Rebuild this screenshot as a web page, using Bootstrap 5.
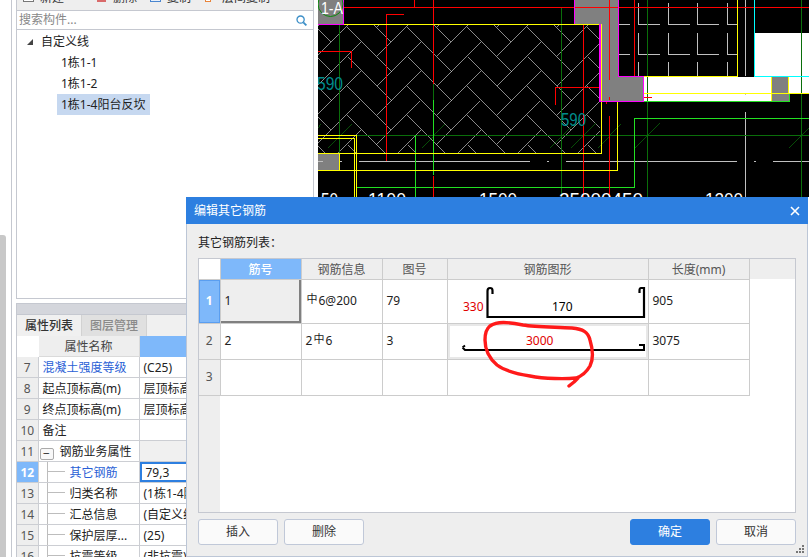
<!DOCTYPE html>
<html lang="zh">
<head>
<meta charset="utf-8">
<title>编辑其它钢筋</title>
<link href="https://cdn.jsdelivr.net/npm/bootstrap@5.3.0/dist/css/bootstrap.min.css" rel="stylesheet">
<style>
html,body{height:100%;margin:0;background:#fff}
body{font-family:"Noto Sans","Noto Sans CJK SC",sans-serif;font-size:12px;line-height:14px;color:#222;overflow:hidden}
.stage{position:relative;width:809px;height:557px;overflow:hidden}
.rail{width:11px;flex:none}
.thumb{width:6px;height:322px;background:#c8c8c8;border-top-right-radius:3px}
.frame{width:307px;flex:none;border-left:1px solid #c5c8d0;padding-left:4px;padding-right:4px}
.upper{height:299px;flex:none;border:1px solid #c5c8d0;border-top:0}
.toolbar{height:11px;flex:none;background:#eee;border-bottom:1px solid #c5c8d0;overflow:hidden;padding-left:6px}
.tool{align-items:flex-end;gap:6px;white-space:nowrap;height:10px;color:#333}
.tool svg{flex:none;margin-bottom:8px}
.tool span{line-height:12px;margin-bottom:6px}
.t1{width:73px}.t2{width:54px}.t3{width:55px}.t4{width:80px}
.finder{height:19px;flex:none;border-bottom:1px solid #c5c8d0;padding:0 6px 0 2px;color:#888}
.tree{padding:1px 0 0;margin:0;color:#222}
.tree li{height:21px;line-height:21px;padding-left:44px;white-space:nowrap}
.tree li.rootn{padding-left:10px;display:flex;align-items:center;gap:7px}
.tree .picked{display:inline-block;background:#c6d8f0;padding:0 0 0 4px;margin-left:-4px;width:93px;height:21px}
.lower{margin-top:4px;flex:1;min-height:0;border:1px solid #c5c8d0;border-bottom:0;overflow:hidden}
.greybar{height:11px;flex:none;background:#d4d6dc;border-bottom:1px solid #c5c8d0}
.tabrow{height:21px;flex:none;background:#f0f0f0}
.tabb{width:65px;text-align:center;line-height:21px;border-right:1px solid #d2d2d2;font-weight:500;color:#333}
.tabb.off{background:#e0e0e0;color:#8a8a8a}
.ptab.table{table-layout:fixed;width:296px;margin:0;border-collapse:collapse;--bs-table-border-color:#ccced3}
.ptab.table>:not(caption)>*>*{padding:2px 0 0 4px;height:21px;line-height:18px;font-size:12px;font-weight:400;white-space:nowrap;overflow:hidden;color:#222;border:1px solid #ccced3;border-top:0;border-left:0;background:#fff;box-shadow:none}
.ptab.table>thead>tr>th{height:20px;line-height:18px;background:#eee;text-align:center;color:#444;padding:1px 0 0;border-color:#dadada}
.ptab.table>thead>tr>th.blankc{background:#fff;border-color:#fff}
.ptab.table>thead>tr>th.hot{background:#7eb8fa;border-color:#7eb8fa}
.ptab.table>tbody>tr>td.idx{background:#eee;text-align:center;color:#555;padding:2px 0 0}
.ptab.table>tbody>tr>td.idx.now{background:#7eb8fa;color:#fff;font-weight:700}
.ptab.table>tbody>tr>td.linky{color:#2a5fd6}
.ptab.table>tbody>tr>td.shade{background:#f0f0f0}
.ptab.table>tbody>tr>td.expd{padding-left:1px}
.ptab.table>tbody>tr>td.nest{padding-left:31px;background-color:#fff;background-image:linear-gradient(#bdbdbd,#bdbdbd),linear-gradient(#bdbdbd,#bdbdbd);background-repeat:no-repeat;background-size:1px 100%,17px 1px;background-position:8px 0,9px 50%}
.ptab.table>tbody>tr>td.edit{box-shadow:inset 2px 2px 0 #2d7fe0,inset 0 -2px 0 #2d7fe0;padding-left:6px}
.c1{width:21px}.c2{width:101px}
.expander{width:14px;height:12px;border:1px solid #aaa;border-radius:2px;margin-right:6px;color:#333;vertical-align:-2px;background:#f8f8f8;line-height:9px}
.cad{flex:1;min-width:0;overflow:hidden;background:#000}
.cad svg{display:block}
.win{position:absolute;left:186px;top:197px;width:622px;height:360px}
.wintitle{height:27px;flex:none;background:#2d7fe0;color:#fff;padding:0 8px;line-height:27px}
.winbody{flex:1;min-height:0;background:#eee;border:1px solid #bcc6d6;border-top:0;padding:12px 11px 11px;position:relative}
.caption{height:14px;line-height:14px;margin-bottom:8px;color:#222}
.gridbox{flex:1;min-height:0;border:1px solid #c5c8d0;background:#fff;overflow:hidden}
.gridt.table{table-layout:fixed;width:100%;height:100%;margin:0;border-collapse:collapse}
.gridt.table>:not(caption)>*>*{padding:0 0 0 4px;font-size:12px;font-weight:400;line-height:14px;color:#222;vertical-align:middle;background:#fff;border:0;border-right:1px solid #ccc;border-bottom:1px solid #ccc;box-shadow:none;white-space:nowrap}
.gridt.table>thead>tr>th{height:20px;background:#eee;text-align:center;color:#555;padding:2px 0 0}
.gridt.table>thead>tr>th.blankc{background:#fff}
.gridt.table>thead>tr>th.hot{background:#7eb8fa;color:#fff;font-weight:500}
.gridt.table>thead>tr>th.endc{border-right:0;border-bottom:0}
.gridt.table>tbody>tr>td.idx{background:#eee;text-align:center;color:#555;padding:0}
.gridt.table>tbody>tr>td.idx.now{background:#7eb8fa;color:#fff;font-weight:700;box-shadow:inset 0 0 0 1px #5a9ef0}
.gridt.table>tbody>tr>td.cur{background:#eee;box-shadow:inset -2px -2px 0 #808080}
.gridt.table>tbody>tr>td.shp{padding:0}
.gridt.table>tbody>tr>td.shp2{box-shadow:inset 0 0 0 2px #e8e8e8}
.gridt.table>tbody>tr>td.endc{border-right:0;border-bottom:0}
.gridt.table>tbody>tr>td.rest{border-bottom:0;border-right:0}
.gridt.table>tbody>tr>td.lastidx{border-bottom:0;border-right:0}
.r1>td{height:44px}.r2>td{height:36px}.r3>td{height:36px}
.g1{width:21px}.g2{width:81px}.g3{width:81px}.g4{width:65px}.g5{width:201px}.g6{width:101px}
.rebar{font-size:11px;position:relative;top:-2px;margin:0 1px}
.shp svg{display:block;width:200px}
.footerbar{flex:none;margin-top:6px;height:26px}
.btnset{gap:6px}
.wbtn.btn{width:80px;height:26px;padding:0;font-size:12px;line-height:24px;border-radius:3px;background:#fafafa;border:1px solid #c0c8d8;color:#333}
.wbtn.btn.btn-primary{background:#2d7fe0;border-color:#2d7fe0;color:#fff}
.xbtn{background:none;border:0;padding:0;line-height:0}
.annot{position:absolute;left:0;top:0;width:622px;height:360px;pointer-events:none}
.grip{position:absolute;right:2px;bottom:2px;display:block}
</style>
</head>
<body>
<div class="stage d-flex">
  <div class="rail d-flex flex-column justify-content-end"><div class="thumb"></div></div>
  <div class="frame d-flex flex-column">
    <div class="upper d-flex flex-column">
      <div class="toolbar d-flex">
        <div class="tool t1 d-flex"><svg width="11" height="12"><rect x=".5" y=".5" width="10" height="11" fill="#fff" stroke="#777"/></svg><span>新建</span></div>
        <div class="tool t2 d-flex"><svg width="11" height="12"><rect x="1" y="0" width="9" height="12" fill="#d96a6a"/></svg><span>删除</span></div>
        <div class="tool t3 d-flex"><svg width="11" height="12"><rect x=".5" y=".5" width="10" height="11" fill="#e8f0fa" stroke="#4a86cf"/></svg><span>复制</span></div>
        <div class="tool t4 d-flex"><svg width="11" height="12"><rect x=".5" y=".5" width="5" height="11" fill="#fff" stroke="#e8843a"/></svg><span>层间复制</span></div>
      </div>
      <div class="finder d-flex align-items-center justify-content-between">
        <span>搜索构件...</span>
        <svg width="11" height="11" viewBox="0 0 11 11" fill="none" stroke="#3c8fc8"><circle cx="4.6" cy="4.6" r="3.6" stroke-width="1.3"/><path d="M7.3 7.3L10.4 10.4" stroke-width="1.8"/></svg>
      </div>
      <ul class="tree list-unstyled">
        <li class="rootn"><svg width="7" height="6"><polygon points="0,6 6,6 6,0" fill="#444"/></svg><span>自定义线</span></li>
        <li>1栋1-1</li>
        <li>1栋1-2</li>
        <li><span class="picked">1栋1-4阳台反坎</span></li>
      </ul>
    </div>
    <div class="lower d-flex flex-column">
      <div class="greybar"></div>
      <div class="tabrow d-flex"><div class="tabb">属性列表</div><div class="tabb off">图层管理</div></div>
      <table class="table ptab">
        <colgroup><col class="c1"><col class="c2"><col></colgroup>
        <thead><tr><th class="blankc"></th><th>属性名称</th><th class="hot"></th></tr></thead>
        <tbody>
          <tr><td class="idx">7</td><td class="linky">混凝土强度等级</td><td>(C25)</td></tr>
          <tr><td class="idx">8</td><td>起点顶标高(m)</td><td>层顶标高</td></tr>
          <tr><td class="idx">9</td><td>终点顶标高(m)</td><td>层顶标高</td></tr>
          <tr><td class="idx">10</td><td>备注</td><td></td></tr>
          <tr><td class="idx">11</td><td class="expd"><span class="expander d-inline-flex justify-content-center">−</span>钢筋业务属性</td><td class="shade"></td></tr>
          <tr><td class="idx now">12</td><td class="nest linky">其它钢筋</td><td class="edit">79,3</td></tr>
          <tr><td class="idx">13</td><td class="nest">归类名称</td><td>(1栋1-4阳台反坎)</td></tr>
          <tr><td class="idx">14</td><td class="nest">汇总信息</td><td>(自定义线)</td></tr>
          <tr><td class="idx">15</td><td class="nest">保护层厚...</td><td>(25)</td></tr>
          <tr><td class="idx">16</td><td class="nest">抗震等级</td><td>(非抗震)</td></tr>
        </tbody>
      </table>
    </div>
  </div>
  <div class="cad">
    <svg width="491" height="557" viewBox="0 0 491 557" shape-rendering="crispEdges" fill="none">
      <defs>
        <clipPath id="hatchclip"><rect x="0" y="25" width="282" height="128"/></clipPath>
      </defs>
      <path id="hatch" clip-path="url(#hatchclip)" stroke="#c4c4c4" stroke-width="0.7"/>
      <rect x="490" y="197" width="1" height="360" fill="#fff"/>
      <!-- grey and white masses -->
      <rect x="0" y="0" width="25" height="24" fill="#808080"/>
      <polygon points="257,0 300,0 300,76 325,76 325,101 282,101 282,24 257,24" fill="#808080"/>
      <rect x="0" y="154" width="21" height="16" fill="#808080"/>
      <rect x="326" y="77" width="127" height="24" fill="#fff"/>
      <rect x="453" y="77" width="18" height="24" fill="#808080"/>
      <rect x="471" y="77" width="20" height="16" fill="#fff"/>
      <rect x="437" y="33" width="54" height="43" fill="#fff"/>
      <!-- grey drafting lines -->
      <g stroke="#c0c0c0" stroke-width="1">
        <path d="M0 161.5H5M22 161.5H24M41 161.5H212M229 161.5H231M248 161.5H419M436 161.5H438M455 161.5H491M427.5 0V76M427.5 112V197M427.5 93V95"/>
        <path d="M320.5 3V24.5H342M350.5 3V24.5H372M379.5 3V24.5H401M409.5 3V24.5H419M300 24.5H312"/>
        <path d="M320.5 33V54.5H342M350.5 33V54.5H372M379.5 33V54.5H401M409.5 33V54.5H419M300 54.5H312"/>
        <path d="M320.5 62V76M350.5 62V76M379.5 62V76M409.5 62V76"/>
      </g>
      <!-- dark green axes -->
      <g stroke="#0a6e0a" stroke-width="1">
        <path d="M0 135.5H491M21.5 25V153M243.5 8V197M329.5 0V197M483.5 0V197"/>
        <path d="M115.5 84V100"/>
      </g>
      <path d="M10 148L34 124M104 148L127 124M232 148L256 124M253 148L278 123M280 148L303 124M317 148L342 123M471 148L497 122M0 128L3 124" stroke="#0a6e0a" stroke-width="0.7"/>
      <!-- bright green -->
      <path d="M97.5 135V197M115.5 100V175M38 187.5H316.5V118.5H491M326 101.5H471V93" stroke="#22e022" stroke-width="1"/>
      <!-- red -->
      <path d="M25 7.5H491M96.5 0V7M86 14.5H68.5V161M0 51.5H33.5V68M115.5 0V84M115.5 176V197M265.5 24V197M291.5 0V80M291.5 97V100M291.5 116V197M316.5 0V76M237.5 105V87.5H282M326 97.5H334M288.5 102V104" stroke="#ff0000" stroke-width="1"/>
      <!-- yellow -->
      <path d="M26 24.5H257M257 24.5H283V153.5H0M299.5 102V170.5H0M0 135.5H38.5V197M0 138.5H36V197M21.5 154V170M419.5 0V76.5H326M326 93.5H491M453.5 77V101M470.5 77V93" stroke="#ffff00" stroke-width="1"/>
      <!-- magenta -->
      <path d="M25.5 0V24.5H0M256.5 0V24M281.5 24V102M282.5 24V102M300.5 0V76.5H325.5V101.5H282" stroke="#ff00ff" stroke-width="1"/>
      <!-- cyan -->
      <path d="M436.5 0V76.5H491" stroke="#00ffff" stroke-width="1"/>
      <!-- labels -->
      <circle cx="12.5" cy="4" r="12.5" stroke="#0a8a0a" stroke-width="1" shape-rendering="auto"/>
      <g shape-rendering="auto" font-family="Liberation Sans, sans-serif">
        <text x="3" y="14" fill="#fff" font-size="16" textLength="22" lengthAdjust="spacingAndGlyphs">1-A</text>
        <text x="-1" y="90" fill="#008c8c" font-size="19" textLength="26" lengthAdjust="spacingAndGlyphs">590</text>
        <text x="243" y="126" fill="#008c8c" font-size="19" textLength="25" lengthAdjust="spacingAndGlyphs">590</text>
        <g fill="#fff" font-size="18">
          <text x="3" y="206" textLength="17" lengthAdjust="spacingAndGlyphs">50</text>
          <text x="50" y="206" textLength="38" lengthAdjust="spacingAndGlyphs">1100</text>
          <text x="161" y="206" textLength="38" lengthAdjust="spacingAndGlyphs">1500</text>
          <text x="241" y="206" textLength="84" lengthAdjust="spacingAndGlyphs">25000450</text>
          <text x="387" y="206" textLength="38" lengthAdjust="spacingAndGlyphs">1200</text>
        </g>
      </g>
    </svg>
  </div>

  <div class="win d-flex flex-column">
    <div class="wintitle d-flex justify-content-between align-items-center">
      <span>编辑其它钢筋</span>
      <button type="button" class="xbtn" aria-label="关闭"><svg width="10" height="10" viewBox="0 0 10 10"><path d="M1 1L9 9M9 1L1 9" stroke="#fff" stroke-width="1.6"/></svg></button>
    </div>
    <div class="winbody d-flex flex-column">
      <div class="caption">其它钢筋列表：</div>
      <div class="gridbox">
        <table class="table gridt">
          <colgroup><col class="g1"><col class="g2"><col class="g3"><col class="g4"><col class="g5"><col class="g6"><col></colgroup>
          <thead><tr><th class="blankc"></th><th class="hot">筋号</th><th>钢筋信息</th><th>图号</th><th>钢筋图形</th><th>长度(mm)</th><th class="endc"></th></tr></thead>
          <tbody>
            <tr class="r1">
              <td class="idx now">1</td><td class="cur">1</td><td><span class="rebar">中</span>6@200</td><td>79</td>
              <td class="shp"><svg height="43" viewBox="0 0 200 43" fill="none">
                <path d="M44.5 14V10.5Q44.5 8 42 8Q39.5 8 39.5 11V37H196V8H193Q191.5 8 191.5 10.5V13" stroke="#000" stroke-width="2.2"/>
                <text x="15" y="30.5" fill="#e00000" font-size="12">330</text>
                <text x="104" y="30.5" fill="#000" font-size="12">170</text>
              </svg></td>
              <td>905</td><td class="endc"></td>
            </tr>
            <tr class="r2">
              <td class="idx">2</td><td>2</td><td>2<span class="rebar">中</span>6</td><td>3</td>
              <td class="shp shp2"><svg height="35" viewBox="0 0 200 35" fill="none">
                <path d="M14.5 23.5L17 26H196V21H191M14.5 23.5L17 21.5" stroke="#000" stroke-width="2"/>
                <text x="78" y="20.5" fill="#e00000" font-size="12">3000</text>
              </svg></td>
              <td>3075</td><td class="endc"></td>
            </tr>
            <tr class="r3">
              <td class="idx">3</td><td></td><td></td><td></td><td></td><td></td><td class="endc"></td>
            </tr>
            <tr><td class="idx lastidx"></td><td class="rest" colspan="6"></td></tr>
          </tbody>
        </table>
      </div>
      <div class="footerbar d-flex justify-content-between">
        <div class="d-flex btnset"><button type="button" class="btn wbtn">插入</button><button type="button" class="btn wbtn">删除</button></div>
        <div class="d-flex btnset"><button type="button" class="btn btn-primary wbtn">确定</button><button type="button" class="btn wbtn">取消</button></div>
      </div>
      <svg class="grip" width="9" height="9" viewBox="0 0 9 9" fill="#777"><rect x="6" y="0" width="2" height="2"/><rect x="3" y="3" width="2" height="2"/><rect x="6" y="3" width="2" height="2"/><rect x="0" y="6" width="2" height="2"/><rect x="3" y="6" width="2" height="2"/><rect x="6" y="6" width="2" height="2"/></svg>
    </div>
    <svg class="annot" viewBox="186 197 622 360" fill="none"><path d="M490 326C497 321 508 322 523 325C535 327 555 327 572 328C583 329 588 332 590 340C593 350 594 358 590 366C586 373 582 376 576 378C566 379 545 379 530 376C517 374 505 371 497 365C490 359 485 350 485 340C485 333 486 329 490 326M578 378L574 382L569 386" stroke="#ff1a1a" stroke-width="3.4" stroke-linecap="round" stroke-linejoin="round"/></svg>
  </div>
</div>
<script src="https://cdn.jsdelivr.net/npm/bootstrap@5.3.0/dist/js/bootstrap.bundle.min.js"></script>
<script>
  // Herringbone hatch: two strokes repeated on a 60 x 29.33 lattice.
  (function () {
    var d = [];
    for (var i = -3; i < 6; i++) {
      for (var j = -4; j < 7; j++) {
        var ox = 60 * i, oy = 29.33 * j;
        d.push('M' + (89.3 + ox) + ' ' + (27.3 + oy) + 'l44.3 44.3');
        d.push('M' + (118.7 + ox) + ' ' + (86 + oy) + 'l44 -44');
      }
    }
    document.getElementById('hatch').setAttribute('d', d.join(''));
  })();
</script>
</body>
</html>
